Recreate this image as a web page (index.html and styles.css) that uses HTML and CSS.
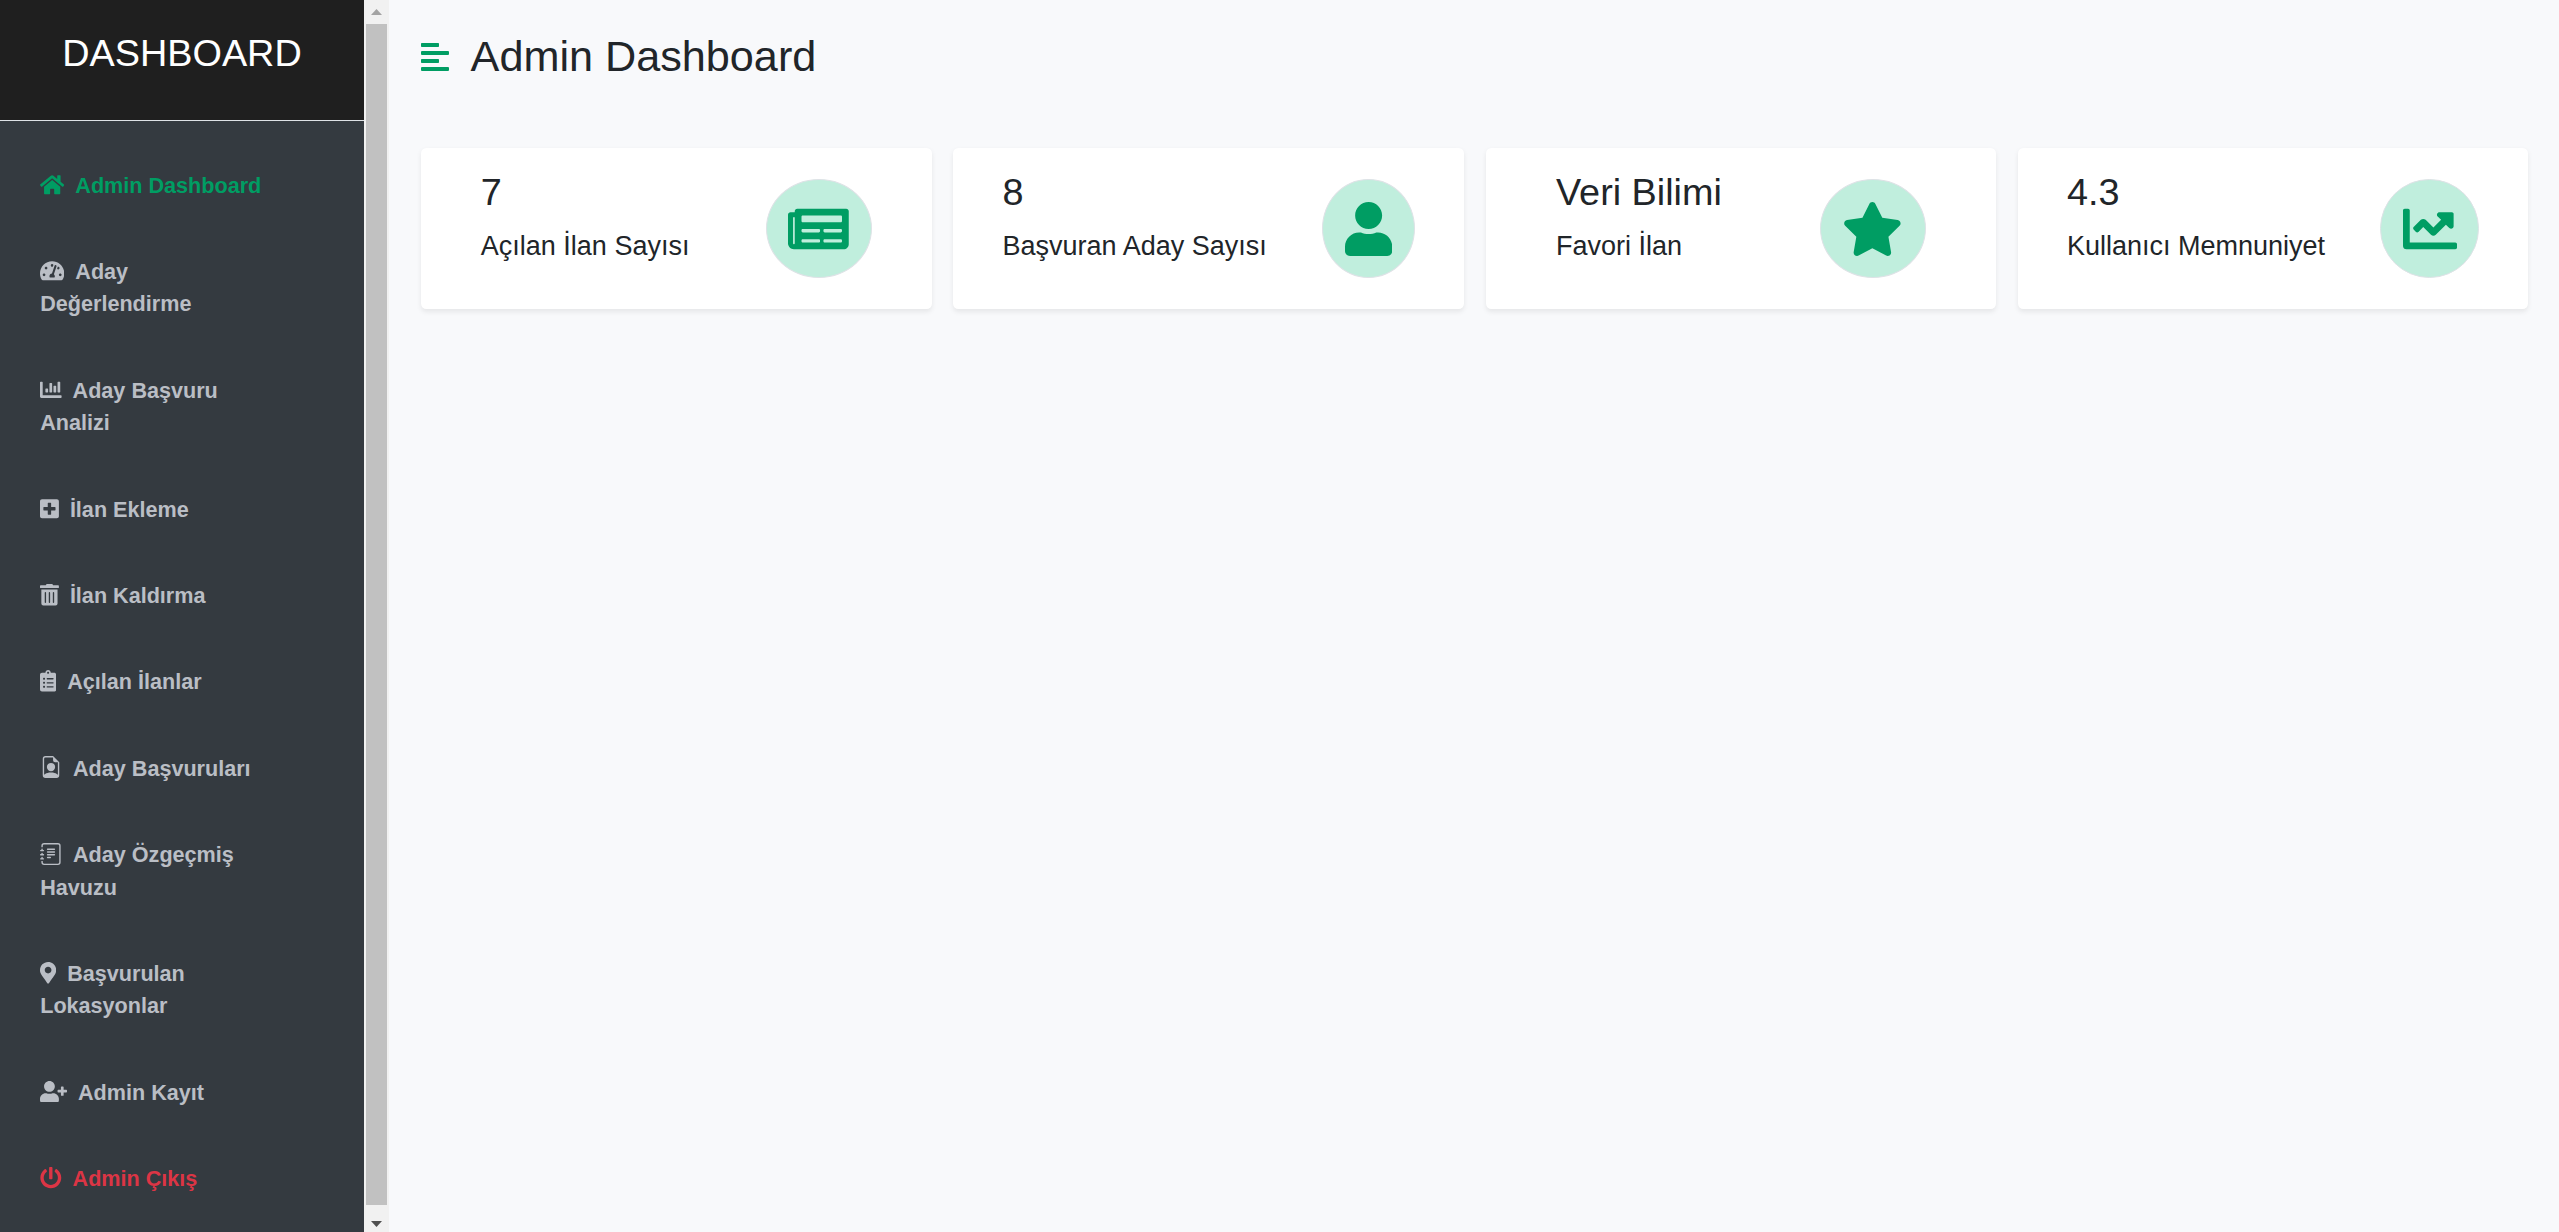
FILE: index.html
```html
<!DOCTYPE html>
<html lang="tr">
<head>
<meta charset="utf-8">
<title>Admin Dashboard</title>
<link rel="stylesheet" href="styles.css">
</head>
<body>
<div class="wrapper">
  <aside class="sidebar">
    <div class="sidebar-panel">
      <div class="sidebar-heading">DASHBOARD</div>
      <nav class="menu">
        <a class="menu-item active"><svg class="icon" style="width:1.125em" viewBox="0 0 576 512"><path d="M280.37 148.26L96 300.11V464a16 16 0 0 0 16 16l112.06-.29a16 16 0 0 0 15.92-16V368a16 16 0 0 1 16-16h64a16 16 0 0 1 16 16v95.64a16 16 0 0 0 16 16.05L464 480a16 16 0 0 0 16-16V300L295.67 148.26a12.19 12.19 0 0 0-15.3 0zM571.6 251.47L488 182.56V44.05a12 12 0 0 0-12-12h-56a12 12 0 0 0-12 12v72.61L318.47 43a48 48 0 0 0-61 0L4.34 251.47a12 12 0 0 0-1.6 16.9l25.5 31A12 12 0 0 0 45.15 301l235.22-193.74a12.19 12.19 0 0 1 15.3 0L530.9 301a12 12 0 0 0 16.9-1.6l25.5-31a12 12 0 0 0-1.7-16.93z"/></svg>Admin Dashboard</a>
        <a class="menu-item"><svg class="icon" style="width:1.125em" viewBox="0 0 576 512"><path d="M288 32C128.94 32 0 160.94 0 320c0 52.8 14.25 102.26 39.06 144.8 5.61 9.62 16.3 15.2 27.44 15.2h443c11.14 0 21.83-5.58 27.44-15.2C561.75 422.26 576 372.8 576 320c0-159.06-128.94-288-288-288zm0 64c14.71 0 26.58 10.13 30.32 23.65-1.11 2.26-2.64 4.23-3.45 6.67l-9.22 27.67c-5.13 3.49-10.97 6.01-17.64 6.01-17.67 0-32-14.33-32-32S270.33 96 288 96zM96 384c-17.67 0-32-14.33-32-32s14.33-32 32-32 32 14.33 32 32-14.33 32-32 32zm48-160c-17.67 0-32-14.33-32-32s14.33-32 32-32 32 14.33 32 32-14.33 32-32 32zm246.77-72.41l-61.33 184C343.13 347.33 352 364.54 352 384c0 11.72-3.38 22.55-8.88 32H232.88c-5.5-9.45-8.88-20.28-8.88-32 0-33.94 26.5-61.43 59.9-63.59l61.34-184.01c4.17-12.56 17.73-19.45 30.36-15.17 12.57 4.19 19.35 17.79 15.17 30.36zm14.66 57.2l15.52-46.55c3.47-1.29 7.13-2.23 11.05-2.23 17.67 0 32 14.33 32 32s-14.33 32-32 32c-11.38-.01-20.89-6.28-26.57-15.22zM480 384c-17.67 0-32-14.33-32-32s14.33-32 32-32 32 14.33 32 32-14.33 32-32 32z"/></svg>Aday Değerlendirme</a>
        <a class="menu-item"><svg class="icon" viewBox="0 0 512 512"><path d="M332.8 320h38.4c6.4 0 12.8-6.4 12.8-12.8V172.8c0-6.4-6.4-12.8-12.8-12.8h-38.4c-6.4 0-12.8 6.4-12.8 12.8v134.4c0 6.4 6.4 12.8 12.8 12.8zm96 0h38.4c6.4 0 12.8-6.4 12.8-12.8V76.8c0-6.4-6.4-12.8-12.8-12.8h-38.4c-6.4 0-12.8 6.4-12.8 12.8v230.4c0 6.4 6.4 12.8 12.8 12.8zm-288 0h38.4c6.4 0 12.8-6.4 12.8-12.8v-70.4c0-6.4-6.4-12.8-12.8-12.8h-38.4c-6.4 0-12.8 6.4-12.8 12.8v70.4c0 6.4 6.4 12.8 12.8 12.8zm96 0h38.4c6.4 0 12.8-6.4 12.8-12.8V108.8c0-6.4-6.4-12.8-12.8-12.8h-38.4c-6.4 0-12.8 6.4-12.8 12.8v198.4c0 6.4 6.4 12.8 12.8 12.8zM496 384H64V80c0-8.84-7.16-16-16-16H16C7.16 64 0 71.16 0 80v336c0 17.67 14.33 32 32 32h464c8.84 0 16-7.16 16-16v-32c0-8.84-7.16-16-16-16z"/></svg>Aday Başvuru Analizi</a>
        <a class="menu-item"><svg class="icon" style="width:.875em" viewBox="0 0 448 512"><path d="M400 32H48C21.5 32 0 53.5 0 80v352c0 26.5 21.5 48 48 48h352c26.5 0 48-21.5 48-48V80c0-26.5-21.5-48-48-48zm-32 252c0 6.6-5.4 12-12 12h-92v92c0 6.6-5.4 12-12 12h-56c-6.6 0-12-5.4-12-12v-92H92c-6.6 0-12-5.4-12-12v-56c0-6.6 5.4-12 12-12h92v-92c0-6.6 5.4-12 12-12h56c6.6 0 12 5.4 12 12v92h92c6.6 0 12 5.4 12 12v56z"/></svg>İlan Ekleme</a>
        <a class="menu-item"><svg class="icon" style="width:.875em" viewBox="0 0 448 512"><path d="M32 464a48 48 0 0 0 48 48h288a48 48 0 0 0 48-48V128H32zm272-256a16 16 0 0 1 32 0v224a16 16 0 0 1-32 0zm-96 0a16 16 0 0 1 32 0v224a16 16 0 0 1-32 0zm-96 0a16 16 0 0 1 32 0v224a16 16 0 0 1-32 0zM432 32H312l-9.4-18.7A24 24 0 0 0 281.1 0H166.8a23.72 23.72 0 0 0-21.4 13.3L136 32H16A16 16 0 0 0 0 48v32a16 16 0 0 0 16 16h416a16 16 0 0 0 16-16V48a16 16 0 0 0-16-16z"/></svg>İlan Kaldırma</a>
        <a class="menu-item"><svg class="icon" style="width:.75em" viewBox="0 0 384 512"><path d="M336 64h-80c0-35.3-28.7-64-64-64s-64 28.7-64 64H48C21.5 64 0 85.5 0 112v352c0 26.5 21.5 48 48 48h288c26.5 0 48-21.5 48-48V112c0-26.5-21.5-48-48-48zM96 424c-13.3 0-24-10.7-24-24s10.7-24 24-24 24 10.7 24 24-10.7 24-24 24zm0-96c-13.3 0-24-10.7-24-24s10.7-24 24-24 24 10.7 24 24-10.7 24-24 24zm0-96c-13.3 0-24-10.7-24-24s10.7-24 24-24 24 10.7 24 24-10.7 24-24 24zm96-192c13.3 0 24 10.7 24 24s-10.7 24-24 24-24-10.7-24-24 10.7-24 24-24zm128 368c0 4.4-3.6 8-8 8H168c-4.4 0-8-3.6-8-8v-16c0-4.4 3.6-8 8-8h144c4.4 0 8 3.6 8 8v16zm0-96c0 4.4-3.6 8-8 8H168c-4.4 0-8-3.6-8-8v-16c0-4.4 3.6-8 8-8h144c4.4 0 8 3.6 8 8v16zm0-96c0 4.4-3.6 8-8 8H168c-4.4 0-8-3.6-8-8v-16c0-4.4 3.6-8 8-8h144c4.4 0 8 3.6 8 8v16z"/></svg>Açılan İlanlar</a>
        <a class="menu-item"><svg class="icon icon-outline" viewBox="0 0 16 16"><path d="M11 8a3 3 0 1 1-6 0 3 3 0 0 1 6 0z"/><path d="M14 14V4.5L9.5 0H4a2 2 0 0 0-2 2v12a2 2 0 0 0 2 2h8a2 2 0 0 0 2-2zM9.5 3A1.5 1.5 0 0 0 11 4.5h2v9.255S12 12 8 12s-5 1.755-5 1.755V2a1 1 0 0 1 1-1h5.5v2z"/></svg>Aday Başvuruları</a>
        <a class="menu-item"><svg class="icon icon-outline" viewBox="0 0 16 16"><path d="M5 10.5a.5.5 0 0 1 .5-.5h2a.5.5 0 0 1 0 1h-2a.5.5 0 0 1-.5-.5zm0-2a.5.5 0 0 1 .5-.5h5a.5.5 0 0 1 0 1h-5a.5.5 0 0 1-.5-.5zm0-2a.5.5 0 0 1 .5-.5h5a.5.5 0 0 1 0 1h-5a.5.5 0 0 1-.5-.5zm0-2a.5.5 0 0 1 .5-.5h5a.5.5 0 0 1 0 1h-5a.5.5 0 0 1-.5-.5z"/><path d="M3 0h10a2 2 0 0 1 2 2v12a2 2 0 0 1-2 2H3a2 2 0 0 1-2-2v-1h1v1a1 1 0 0 0 1 1h10a1 1 0 0 0 1-1V2a1 1 0 0 0-1-1H3a1 1 0 0 0-1 1v1H1V2a2 2 0 0 1 2-2z"/><path d="M1 5v-.5a.5.5 0 0 1 1 0V5h.5a.5.5 0 0 1 0 1h-2a.5.5 0 0 1 0-1H1zm0 3v-.5a.5.5 0 0 1 1 0V8h.5a.5.5 0 0 1 0 1h-2a.5.5 0 0 1 0-1H1zm0 3v-.5a.5.5 0 0 1 1 0v.5h.5a.5.5 0 0 1 0 1h-2a.5.5 0 0 1 0-1H1z"/></svg>Aday Özgeçmiş Havuzu</a>
        <a class="menu-item"><svg class="icon" style="width:.75em" viewBox="0 0 384 512"><path d="M172.268 501.67C26.97 291.031 0 269.413 0 192 0 85.961 85.961 0 192 0s192 85.961 192 192c0 77.413-26.97 99.031-172.268 309.67-9.535 13.774-29.93 13.773-39.464 0zM192 272c44.183 0 80-35.817 80-80s-35.817-80-80-80-80 35.817-80 80 35.817 80 80 80z"/></svg>Başvurulan Lokasyonlar</a>
        <a class="menu-item"><svg class="icon" style="width:1.25em" viewBox="0 0 640 512"><path d="M624 208h-64v-64c0-8.8-7.2-16-16-16h-32c-8.8 0-16 7.2-16 16v64h-64c-8.8 0-16 7.2-16 16v32c0 8.8 7.2 16 16 16h64v64c0 8.8 7.2 16 16 16h32c8.8 0 16-7.2 16-16v-64h64c8.8 0 16-7.2 16-16v-32c0-8.8-7.2-16-16-16zm-400 48c70.7 0 128-57.3 128-128S294.7 0 224 0 96 57.3 96 128s57.3 128 128 128zm89.6 32h-16.7c-22.2 10.2-46.9 16-72.9 16s-50.6-5.8-72.9-16h-16.7C60.2 288 0 348.2 0 422.4V464c0 26.5 21.5 48 48 48h352c26.5 0 48-21.5 48-48v-41.6c0-74.2-60.2-134.4-134.4-134.4z"/></svg>Admin Kayıt</a>
        <a class="menu-item danger"><svg class="icon" viewBox="0 0 512 512"><path d="M400 54.1c63 45 104 118.6 104 201.9 0 136.8-110.8 247.7-247.5 248C120 504.3 8.2 393 8 256.4 7.9 173.1 48.9 99.3 111.8 54.2c11.7-8.3 28-4.8 35 7.7L162.6 90c5.9 10.5 3.1 23.8-6.6 31-41.5 30.8-68 79.6-68 134.9-.1 92.3 74.5 168.1 168 168.1 91.6 0 168.6-74.2 168-169.1-.3-51.8-24.7-101.8-68.1-134-9.7-7.2-12.4-20.5-6.5-30.9l15.8-28.1c7-12.4 23.2-16.1 34.8-7.8zM296 264V24c0-13.3-10.7-24-24-24h-32c-13.3 0-24 10.7-24 24v240c0 13.3 10.7 24 24 24h32c13.3 0 24-10.7 24-24z"/></svg>Admin Çıkış</a>
      </nav>
    </div>
    <div class="scrollbar">
      <svg class="arrow arrow-up" viewBox="0 0 11 6"><path d="M0 6L5.5 0 11 6z"/></svg>
      <div class="thumb"></div>
      <svg class="arrow arrow-down" viewBox="0 0 11 6"><path d="M0 0L5.5 6 11 0z"/></svg>
    </div>
  </aside>
  <main class="content">
    <header class="page-header">
      <svg class="toggle" viewBox="0 0 448 512"><path d="M12.83 352h262.34A12.82 12.82 0 0 0 288 339.17v-38.34A12.82 12.82 0 0 0 275.17 288H12.83A12.82 12.82 0 0 0 0 300.83v38.34A12.82 12.82 0 0 0 12.83 352zm0-256h262.34A12.82 12.82 0 0 0 288 83.17V44.83A12.82 12.82 0 0 0 275.17 32H12.83A12.82 12.82 0 0 0 0 44.83v38.34A12.82 12.82 0 0 0 12.83 96zM432 160H16a16 16 0 0 0-16 16v32a16 16 0 0 0 16 16h416a16 16 0 0 0 16-16v-32a16 16 0 0 0-16-16zm0 256H16a16 16 0 0 0-16 16v32a16 16 0 0 0 16 16h416a16 16 0 0 0 16-16v-32a16 16 0 0 0-16-16z"/></svg>
      <h2>Admin Dashboard</h2>
    </header>
    <section class="cards">
      <div class="card">
        <div><h3>7</h3><p>Açılan İlan Sayısı</p></div>
        <span class="badge"><svg style="width:1.125em" viewBox="0 0 576 512"><path d="M552 64H88c-13.255 0-24 10.745-24 24v8H24c-13.255 0-24 10.745-24 24v272c0 30.928 25.072 56 56 56h472c26.51 0 48-21.49 48-48V88c0-13.255-10.745-24-24-24zM56 400a8 8 0 0 1-8-8V144h16v248a8 8 0 0 1-8 8zm236-16H140c-6.627 0-12-5.373-12-12v-8c0-6.627 5.373-12 12-12h152c6.627 0 12 5.373 12 12v8c0 6.627-5.373 12-12 12zm208 0H348c-6.627 0-12-5.373-12-12v-8c0-6.627 5.373-12 12-12h152c6.627 0 12 5.373 12 12v8c0 6.627-5.373 12-12 12zm-208-96H140c-6.627 0-12-5.373-12-12v-8c0-6.627 5.373-12 12-12h152c6.627 0 12 5.373 12 12v8c0 6.627-5.373 12-12 12zm208 0H348c-6.627 0-12-5.373-12-12v-8c0-6.627 5.373-12 12-12h152c6.627 0 12 5.373 12 12v8c0 6.627-5.373 12-12 12zm0-96H140c-6.627 0-12-5.373-12-12v-40c0-6.627 5.373-12 12-12h360c6.627 0 12 5.373 12 12v40c0 6.627-5.373 12-12 12z"/></svg></span>
      </div>
      <div class="card">
        <div><h3>8</h3><p>Başvuran Aday Sayısı</p></div>
        <span class="badge"><svg style="width:.875em" viewBox="0 0 448 512"><path d="M224 256c70.7 0 128-57.3 128-128S294.7 0 224 0 96 57.3 96 128s57.3 128 128 128zm89.6 32h-16.7c-22.2 10.2-46.9 16-72.9 16s-50.6-5.8-72.9-16h-16.7C60.2 288 0 348.2 0 422.4V464c0 26.5 21.5 48 48 48h352c26.5 0 48-21.5 48-48v-41.6c0-74.2-60.2-134.4-134.4-134.4z"/></svg></span>
      </div>
      <div class="card">
        <div><h3>Veri Bilimi</h3><p>Favori İlan</p></div>
        <span class="badge"><svg style="width:1.125em" viewBox="0 0 576 512"><path d="M259.3 17.8L194 150.2 47.9 171.5c-26.2 3.8-36.7 36.1-17.7 54.6l105.7 103-25 145.5c-4.5 26.3 23.2 46 46.4 33.7L288 439.6l130.7 68.7c23.2 12.2 50.9-7.4 46.4-33.7l-25-145.5 105.7-103c19-18.5 8.5-50.8-17.7-54.6L382 150.2 316.7 17.8c-11.7-23.6-45.6-23.9-57.4 0z"/></svg></span>
      </div>
      <div class="card">
        <div><h3>4.3</h3><p>Kullanıcı Memnuniyet</p></div>
        <span class="badge"><svg style="width:1em" viewBox="0 0 512 512"><path d="M496 384H64V80c0-8.84-7.16-16-16-16H16C7.16 64 0 71.16 0 80v336c0 17.67 14.33 32 32 32h464c8.84 0 16-7.16 16-16v-32c0-8.84-7.16-16-16-16zM464 96H345.94c-21.38 0-32.09 25.85-16.97 40.97l32.4 32.4L288 242.75l-73.37-73.37c-12.5-12.5-32.76-12.5-45.25 0l-68.69 68.69c-6.25 6.25-6.25 16.38 0 22.63l22.62 22.62c6.25 6.25 16.38 6.25 22.63 0L192 237.25l73.37 73.37c12.5 12.5 32.76 12.5 45.25 0l96-96 32.4 32.4c15.12 15.12 40.97 4.41 40.97-16.97V112c.01-8.84-7.15-16-15.99-16z"/></svg></span>
      </div>
    </section>
  </main>
</div>
</body>
</html>
```
FILE: styles.css
```css
html {
  font-size: 21.6px;
}

*, *::before, *::after {
  box-sizing: border-box;
}

body {
  margin: 0;
  font-family: "Liberation Sans", Arial, sans-serif;
  font-size: 1rem;
  line-height: 1.5;
  color: #212529;
  background: #f8f9fb;
}

h2, h3, p {
  margin: 0;
  font-weight: 400;
}

svg {
  display: block;
  fill: currentColor;
}

.wrapper {
  display: flex;
  height: 1232px;
  overflow: hidden;
}

.sidebar {
  display: flex;
  flex: none;
  width: 389px;
}

.sidebar-panel {
  width: 364px;
  background: #343a40;
}

.sidebar-heading {
  height: 121px;
  padding-top: 25px;
  border-bottom: 1px solid #dee2e6;
  background: #1f1f1f;
  color: #fff;
  font-size: 1.75rem;
  text-align: center;
}

.menu {
  padding-top: 21.6px;
}

.menu-item {
  display: block;
  padding: 1.25rem 85px 1.25rem 40.2px;
  font-weight: 700;
  color: #babec5;
}

.menu-item.active {
  color: #009d63;
}

.menu-item.danger {
  color: #dc3545;
}

.icon {
  display: inline-block;
  width: 1em;
  height: 1em;
  margin-right: .5rem;
  vertical-align: -.125em;
}

.icon-outline {
  width: 22px;
  height: 22px;
}

.scrollbar {
  display: flex;
  flex-direction: column;
  align-items: center;
  width: 25px;
  padding: 9px 2px 5px;
  background: #f1f1f1;
}

.arrow {
  width: 11px;
  height: 6px;
}

.arrow-up {
  fill: #a3a3a3;
}

.arrow-down {
  fill: #505050;
}

.thumb {
  flex: 1;
  width: 21px;
  margin: 9px 0 16px;
  background: #c1c1c1;
}

.content {
  flex: 1;
  padding: 31px 30.6px 0 32px;
}

.page-header {
  display: flex;
  align-items: center;
  gap: 1rem;
  height: 52px;
}

.page-header h2 {
  font-size: 2rem;
  line-height: 1.2;
}

.toggle {
  width: 28px;
  height: 32px;
  color: #009d63;
}

.cards {
  display: grid;
  grid-template-columns: repeat(4, 1fr);
  gap: 1rem;
  margin-top: 65px;
}

.card {
  display: flex;
  align-items: center;
  justify-content: space-around;
  padding: 1rem;
  border-radius: .25rem;
  background: #fff;
  box-shadow: 0 .125rem .25rem rgba(0, 0, 0, .075);
}

.card h3 {
  margin-bottom: .5rem;
  font-size: 1.75rem;
  line-height: 1.2;
}

.card p {
  margin-bottom: 1rem;
  font-size: 1.25rem;
}

.badge {
  padding: 1rem;
  border: 1px solid #dee2e6;
  border-radius: 50%;
  background: #c0eedd;
  color: #009d63;
  font-size: 2.5rem;
}

.badge svg {
  height: 1em;
}
```
